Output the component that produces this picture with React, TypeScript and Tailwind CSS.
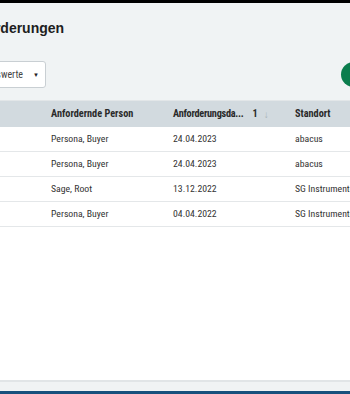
import React from "react";

const rows = [
  { person: "Persona, Buyer", date: "24.04.2023", site: "abacus" },
  { person: "Persona, Buyer", date: "24.04.2023", site: "abacus" },
  { person: "Sage, Root", date: "13.12.2022", site: "SG Instrumente" },
  { person: "Persona, Buyer", date: "04.04.2022", site: "SG Instrumente" },
];

const narrow = { fontFamily: '"Roboto Condensed", "Liberation Sans", sans-serif' };

export default function App() {
  return (
    <div
      className="w-[350px] h-[394px] overflow-hidden bg-[#f0f3f4] flex flex-col"
      style={{ fontFamily: '"Liberation Sans", Arial, sans-serif' }}
    >
      <div className="h-[3px] bg-black shrink-0" />
      <div className="flex-1 flex flex-col min-h-0">
        <div className="h-[51px] flex items-center shrink-0">
          <h1 className="-ml-[37px] text-[14px] font-bold text-[#1e1e1e] whitespace-nowrap leading-none mt-[-1px]">
            Anforderungen
          </h1>
        </div>
        <div className="h-[46px] flex items-start justify-between shrink-0 pt-[7px]">
          <div
            className="-ml-[40px] w-[86px] h-[27px] shrink-0 bg-white border border-[#c9cfd3] rounded-[3px] flex items-center justify-end pr-[6px] text-[10px] text-[#444]"
            style={narrow}
          >
            <span className="whitespace-nowrap">Alle Auswerte</span>
            <span className="ml-[10px] text-[6px] text-[#222]">▼</span>
          </div>
          <div className="mr-[-40px] mt-[1px] w-[49px] h-[25px] shrink-0 rounded-full bg-[#0b7d4d]" />
        </div>
        <div className="flex-1 min-h-0 flex flex-col -ml-[79px] bg-white" style={narrow}>
          <div className="border-t border-[#e2e6e8] h-[27px] bg-[#d2dadf] flex items-center text-[10.25px] font-bold text-[#2a2a2a] shrink-0">
            <div className="w-[122px] shrink-0 px-2 whitespace-nowrap">Bezeichnung</div>
            <div className="w-[122px] shrink-0 px-2 whitespace-nowrap">Anfordernde Person</div>
            <div className="w-[122px] shrink-0 px-2 whitespace-nowrap flex items-center">
              <span className="tracking-[-0.25px]">Anforderungsda...</span>
              <span className="ml-[9px]">1</span>
              <span className="ml-[6px] text-[#a8b2b8] font-normal text-[10px]">↓</span>
            </div>
            <div className="w-[122px] shrink-0 px-2 whitespace-nowrap">Standort</div>
          </div>
          {rows.map((r, i) => (
            <div
              key={i}
              className="h-[25px] border-b border-[#e4e7e9] flex items-center text-[9.75px] text-[#333] shrink-0"
            >
              <div className="w-[122px] shrink-0 px-2 whitespace-nowrap overflow-hidden">Anforderung {i + 1}</div>
              <div className="w-[122px] shrink-0 px-2 whitespace-nowrap">{r.person}</div>
              <div className="w-[122px] shrink-0 px-2 whitespace-nowrap">{r.date}</div>
              <div className="w-[122px] shrink-0 px-2 whitespace-nowrap">{r.site}</div>
            </div>
          ))}
          <div className="flex-1" />
        </div>
        <div className="h-[11px] border-t-2 border-[#e1e5e7] bg-[#f0f3f4] shrink-0" />
        <div className="h-[3px] bg-[#17507d] shrink-0" />
      </div>
    </div>
  );
}
